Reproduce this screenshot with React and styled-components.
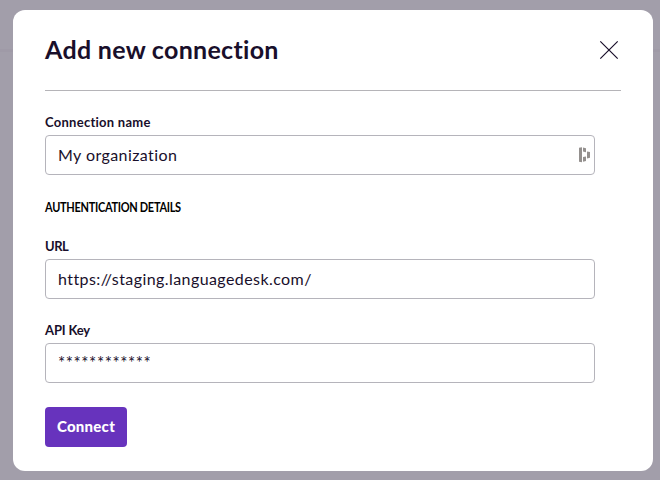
import React from "react";
import styled, { createGlobalStyle } from "styled-components";

const GlobalStyle = createGlobalStyle`
  * { box-sizing: border-box; font-variant-ligatures: none; }
  body {
    margin: 0;
    background: #a29eaa;
    color: #190f2b;
    font-family: Lato, "Open Sans", sans-serif;
  }
`;

const Backdrop = styled.main`
  height: 480px;
  padding: 10px 7px 9px 13px;
  overflow: hidden;
  background: linear-gradient(#a29eaa 0 49px, #9f9aa7 49px 52px, #a29eaa 52px);
`;

const Dialog = styled.section`
  height: 461px;
  padding: 0 32px;
  border-radius: 12px;
  background: #fff;
`;

const Header = styled.header`
  display: flex;
  align-items: center;
  justify-content: space-between;
  height: 81px;
  border-bottom: 1px solid #b5b4b8;
`;

const Title = styled.h1`
  margin: 0 0 2px;
  font-size: 25px;
  line-height: 32px;
  font-weight: 700;
  letter-spacing: 0.3px;
  white-space: nowrap;
`;

const CloseButton = styled.button`
  display: flex;
  padding: 0;
  margin-right: 2px;
  border: 0;
  background: none;
  color: #190f2b;
`;

const Form = styled.form`
  display: flex;
  flex-direction: column;
  align-items: flex-start;
  padding-top: 22px;
`;

const Field = styled.div`
  width: 550px;
  margin-bottom: ${(p) => p.$gap}px;
`;

const Label = styled.label`
  display: block;
  height: 22px;
  font-size: 13px;
  line-height: 18px;
  font-weight: 700;
  letter-spacing: ${(p) => p.$tracking || 0}px;
`;

const InputBox = styled.div`
  display: flex;
  align-items: center;
  height: 40px;
  padding: 0 3px 0 12px;
  border: 1px solid #b5b4bb;
  border-radius: 4px;
`;

const Input = styled.input`
  flex: 1;
  min-width: 0;
  height: 38px;
  padding: 0;
  border: 0;
  outline: 0;
  background: none;
  color: #190f2b;
  font-family: Lato, "Open Sans", sans-serif;
  font-size: ${(p) => p.$size || 16}px;
  line-height: 38px;
  letter-spacing: ${(p) => p.$tracking || 0}px;
`;

const SectionTitle = styled.h2`
  margin: 0 0 20px;
  color: #000;
  font-size: 13px;
  line-height: 20px;
  font-weight: 700;
  letter-spacing: -0.35px;
  transform: scaleX(0.845);
  transform-origin: left;
`;

const SubmitButton = styled.button`
  width: 82px;
  height: 40px;
  padding: 0 0 2px;
  border: 0;
  border-radius: 4px;
  background: #6733bd;
  color: #fff;
  font-family: Lato, "Open Sans", sans-serif;
  font-size: 15px;
  line-height: 38px;
  font-weight: 900;
  letter-spacing: 0.25px;
`;

const CloseIcon = () => (
  <svg width="20" height="20" viewBox="0 0 20 20" fill="none" stroke="currentColor" strokeWidth="1.2">
    <path d="M1.3 1.3 18.7 18.7M18.7 1.3 1.3 18.7" />
  </svg>
);

const PasswordManagerIcon = () => (
  <svg width="12" height="16" viewBox="0 0 12 16" fill="#94908e">
    <path d="M0 .8 3 .2V15.2L0 14.7ZM4 .4 7 1.2V5.2L4 4.6ZM4 10 7 9.4V14L4 14.8ZM8 4.5 11 5V10.8L8 11.5Z" />
  </svg>
);

export default function App() {
  return (
    <>
      <GlobalStyle />
      <Backdrop>
        <Dialog role="dialog" aria-labelledby="title">
          <Header>
            <Title id="title">Add new connection</Title>
            <CloseButton aria-label="Close"><CloseIcon /></CloseButton>
          </Header>
          <Form>
            <Field $gap={22}>
              <Label htmlFor="name" $tracking={0.27}>Connection name</Label>
              <InputBox>
                <Input id="name" defaultValue="My organization" $tracking={0.42} />
                <PasswordManagerIcon />
              </InputBox>
            </Field>
            <SectionTitle>AUTHENTICATION DETAILS</SectionTitle>
            <Field $gap={22}>
              <Label htmlFor="url" $tracking={-0.5}>URL</Label>
              <InputBox>
                <Input id="url" defaultValue="https://staging.languagedesk.com/" $tracking={0.42} />
              </InputBox>
            </Field>
            <Field $gap={24}>
              <Label htmlFor="key" $tracking={-0.15}>API Key</Label>
              <InputBox>
                <Input id="key" defaultValue="************" $size={17} $tracking={0.55} />
              </InputBox>
            </Field>
            <SubmitButton type="button">Connect</SubmitButton>
          </Form>
        </Dialog>
      </Backdrop>
    </>
  );
}
